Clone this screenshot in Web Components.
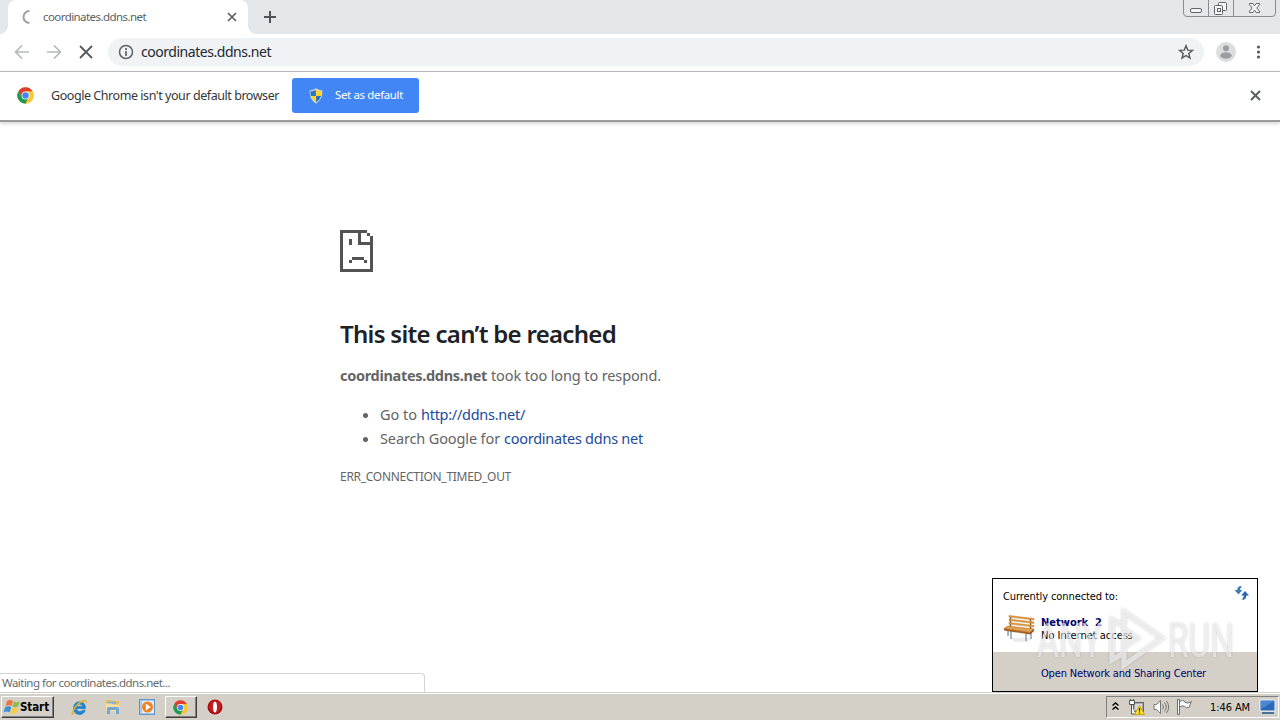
<!DOCTYPE html>
<html lang="en">
<head>
<meta charset="utf-8">
<title>coordinates.ddns.net</title>
<style>
  body {
    margin: 0;
    width: 1280px;
    height: 720px;
    overflow: hidden;
    background: #ffffff;
    font-family: "Noto Sans", "Open Sans", sans-serif;
  }
</style>
</head>
<body>
<desktop-screen>
  <tab-strip>coordinates.ddns.net</tab-strip>
  <nav-toolbar>coordinates.ddns.net</nav-toolbar>
  <info-bar>Google Chrome isn't your default browser</info-bar>
  <error-page></error-page>
  <status-bubble slot="status">Waiting for coordinates.ddns.net...</status-bubble>
  <network-flyout slot="flyout"></network-flyout>
  <run-watermark slot="flyout"></run-watermark>
  <task-bar slot="taskbar"></task-bar>
</desktop-screen>

<script>
function define(name, html) {
  const template = document.createElement('template');
  template.innerHTML = html;
  customElements.define(name, class extends HTMLElement {
    connectedCallback() {
      if (this.shadowRoot) return;
      this.attachShadow({ mode: 'open' }).append(template.content.cloneNode(true));
    }
  });
}

// One line of text, tracked so that it fills the given width.
class FitText extends HTMLElement {
  connectedCallback() {
    if (this.shadowRoot) return;
    const shadow = this.attachShadow({ mode: 'open' });
    shadow.innerHTML = '<style>:host { display: inline-block; flex-shrink: 0; white-space: nowrap; } span { display: inline-block; }</style><span><slot></slot></span>';
    const span = shadow.querySelector('span');
    const target = Number(this.getAttribute('width'));
    const nodes = shadow.querySelector('slot').assignedNodes({ flatten: true });
    const count = nodes.map((n) => n.textContent).join('').length;
    const natural = span.getBoundingClientRect().width;
    span.style.letterSpacing = `${(target - natural) / count}px`;
    this.style.width = `${target}px`;
  }
}

define('chrome-logo', `
  <style>
    :host { display: block; width: 17px; height: 17px; }
    svg { display: block; width: 100%; height: 100%; }
  </style>
  <svg viewBox="0 0 48 48">
    <circle cx="24" cy="24" r="23" fill="#fbc733"/>
    <path d="M24 13H44.200A23 23 0 0 0 4 12.500L14.500 29.500Z" fill="#df3f32"/>
    <path d="M4 12.500A23 23 0 0 0 24 47L33.500 29.500 24 34 14.500 29.500Z" fill="#1d9a57"/>
    <path d="M44.200 13A23 23 0 0 1 24 47L33.500 29.500 24 13Z" fill="#fbc733"/>
    <circle cx="24" cy="24" r="11" fill="#ffffff"/>
    <circle cx="24" cy="24" r="9" fill="#4285f4"/>
  </svg>
`);

define('window-buttons', `
  <style>
    :host { display: block; width: 94px; height: 18px; }
    svg { display: block; }
  </style>
  <svg width="94" height="18" fill="none" stroke="#7c8186">
    <path d="M.5 0v13q0 3.500 3.500 3.500h85q3.500 0 3.500-3.500V0M25.500 0v16M50.500 0v16" stroke="#888d92"/>
    <rect x="7.500" y="8.500" width="11" height="4" rx="1.500" fill="#f4f5f6" stroke="#5f6469"/>
    <rect x="35.500" y="2.500" width="8" height="8" rx="1" fill="#f4f5f6" stroke="#5f6469"/>
    <rect x="31.500" y="5.500" width="8" height="9" rx="1" fill="#f4f5f6" stroke="#5f6469"/>
    <rect x="34.500" y="8.500" width="3" height="3" stroke="#5f6469"/>
    <path d="M66.500 3.500h3.300l1.700 2.300 1.700-2.300h3.300v1.300L73.800 8l2.700 3.200v1.300h-3.300l-1.700-2.300-1.700 2.300h-3.300v-1.300L69.200 8l-2.700-3.200z" fill="#f4f5f6" stroke="#5f6469"/>
  </svg>
`);

define('tab-strip', `
  <style>
    :host { display: flex; height: 34px; background: #e3e7ea; box-sizing: border-box; }
    .tab {
      display: flex;
      align-items: center;
      box-sizing: border-box;
      width: 240px;
      height: 34px;
      margin-left: 8px;
      padding: 0 11px 0 12px;
      background: #ffffff;
      border-radius: 8px 8px 0 0;
      position: relative;
    }
    .tab::before, .tab::after {
      content: "";
      position: absolute;
      bottom: 0;
      width: 8px;
      height: 8px;
    }
    .tab::before { left: -8px; background: radial-gradient(circle at 0 0, transparent 7.500px, #ffffff 8px); }
    .tab::after { right: -8px; background: radial-gradient(circle at 100% 0, transparent 7.500px, #ffffff 8px); }
    .title { flex: 1; margin-left: 11px; font-size: 11.500px; line-height: 16px; color: #5c5f62; }
    svg { display: block; flex-shrink: 0; }
    .plus { margin: 10px 0 0 15px; }
    window-buttons { margin-left: auto; margin-right: 3px; }
  </style>
  <div class="tab">
    <svg width="12" height="14" fill="none" stroke="#a0a1a3" stroke-width="2"><path d="M9.500 1A6 6 0 0 0 9.500 13"/></svg>
    <span class="title"><fit-text width="103"><slot></slot></fit-text></span>
    <svg width="10" height="10" stroke="#5c5f62" stroke-width="1.700"><path d="m1 1 8 8M9 1 1 9"/></svg>
  </div>
  <svg class="plus" width="14" height="14" stroke="#505458" stroke-width="2"><path d="M7 1v12M1 7h12"/></svg>
  <window-buttons></window-buttons>
`);

define('nav-toolbar', `
  <style>
    :host {
      display: flex;
      align-items: center;
      box-sizing: border-box;
      height: 38px;
      padding: 0 14px 1px;
      background: #ffffff;
      border-bottom: 1px solid #b1b3b6;
    }
    svg { display: block; flex-shrink: 0; }
    .nav { display: flex; gap: 16px; }
    .omnibox {
      display: flex;
      align-items: center;
      box-sizing: border-box;
      width: 1096px;
      height: 28px;
      margin-left: 14px;
      padding: 0 10px;
      border-radius: 14px;
      background: #f0f3f5;
    }
    .url { flex: 1; margin-left: 7px; font-size: 14px; line-height: 20px; color: #25282c; }
    .avatar { margin-left: 12px; }
    .menu { margin-left: 20px; }
  </style>
  <div class="nav">
    <svg width="16" height="16" fill="none" stroke="#b6b8ba" stroke-width="1.700"><path d="M15 8H2M8 1.500 1.500 8 8 14.500"/></svg>
    <svg width="16" height="16" fill="none" stroke="#b6b8ba" stroke-width="1.700"><path d="M1 8h13M8 1.500 14.500 8 8 14.500"/></svg>
    <svg width="16" height="16" fill="none" stroke="#55595d" stroke-width="1.800"><path d="m2 2 12 12M14 2 2 14"/></svg>
  </div>
  <div class="omnibox">
    <svg width="16" height="16"><circle cx="8" cy="8" r="6.500" fill="none" stroke="#5f6368" stroke-width="1.500"/><path d="M8 7v5M8 4v2" stroke="#5f6368" stroke-width="1.700"/></svg>
    <span class="url"><fit-text width="130"><slot></slot></fit-text></span>
    <svg width="16" height="16" fill="none" stroke="#55595d" stroke-width="1.400"><path d="m8 1.700 1.700 4.400 4.800.3-3.700 3 1.200 4.700L8 11.500l-4 2.600 1.200-4.700-3.700-3 4.800-.3z"/></svg>
  </div>
  <svg class="avatar" width="20" height="20"><circle cx="10" cy="10" r="10" fill="#dcdddd"/><circle cx="10" cy="6.200" r="3" fill="#9b9da0"/><ellipse cx="10" cy="13.500" rx="5.700" ry="3.300" fill="#9b9da0"/></svg>
  <svg class="menu" width="5" height="16" fill="#55595d"><circle cx="2.500" cy="3" r="1.600"/><circle cx="2.500" cy="8" r="1.600"/><circle cx="2.500" cy="13" r="1.600"/></svg>
`);

define('info-bar', `
  <style>
    :host {
      display: flex;
      align-items: center;
      box-sizing: border-box;
      height: 50px;
      padding: 0 19px 1px 17px;
      background: #ffffff;
      border-bottom: 2px solid #9b9b9b;
      box-shadow: 0 1px 4px #c8c8c8;
      position: relative;
    }
    .text { margin-left: 17px; font-size: 12.500px; line-height: 18px; color: #35383b; }
    .button {
      display: flex;
      align-items: center;
      box-sizing: border-box;
      width: 127px;
      height: 35px;
      margin-left: 13px;
      padding-left: 17px;
      gap: 12px;
      border-radius: 3px;
      background: #4285f4;
      color: #ffffff;
      font-size: 11.500px;
      line-height: 16px;
    }
    .button fit-text { padding-bottom: 1px; }
    .close { margin-left: auto; }
    svg { display: block; }
  </style>
  <chrome-logo></chrome-logo>
  <span class="text"><fit-text width="228"><slot></slot></fit-text></span>
  <div class="button">
    <svg width="14" height="16" viewBox="0 0 14 16">
      <path d="M7 .5Q4 2.500.8 2.500.2 11 7 15.500 13.800 11 13.200 2.500 10 2.500 7 .5Z" fill="#e5edf4" stroke="#a9b9c5" stroke-width=".6"/>
      <path d="M6.900 1.700V8H1.900Q1.200 5.800 1.500 3.300 4.500 3.300 6.900 1.700Z" fill="#2f74c4"/>
      <path d="M7.100 1.700V8h5q.7-2.200.4-4.700-3 0-5.400-1.600Z" fill="#f8d32d"/>
      <path d="M6.900 8v6.500Q3.200 12 1.900 8Z" fill="#f8d32d"/>
      <path d="M7.100 8v6.500q3.700-2.500 5-6.500Z" fill="#2871b8"/>
    </svg>
    <fit-text width="68">Set as default</fit-text>
  </div>
  <svg class="close" width="11" height="11" stroke="#5b5f62" stroke-width="2"><path d="m1 1 9 9M10 1 1 10"/></svg>
`);

define('error-page', `
  <style>
    :host { display: block; padding: 108px 0 0 340px; color: #646464; font-size: 14.500px; }
    svg { display: block; margin: 0 0 45px; }
    h1 { display: flex; margin: 0; font-size: 24px; font-weight: 600; line-height: 34px; color: #202124; }
    p { margin: 12px 0 0; line-height: 24px; white-space: nowrap; display: flex; gap: 4px; }
    ul { margin: 15px 0 0; padding: 0 0 0 40px; line-height: 24px; }
    li { height: 24px; }
    a { color: #1b4b9b; margin-left: 4px; }
    .code { display: flex; margin-top: 18px; font-size: 12px; line-height: 18px; }
  </style>
  <svg width="33" height="42" fill="#535353" shape-rendering="crispEdges">
    <path d="M0 0h27v3H3v36h27V15H18V3h3v9h9V6h3v36H0zM27 3h3v3h-3zM9 9h3v6H9zM12 27h12v3H12zM9 30h3v3H9zM24 30h3v3h-3z"/>
  </svg>
  <h1><fit-text width="276">This site can’t be reached</fit-text></h1>
  <p><b><fit-text width="147">coordinates.ddns.net</fit-text></b><fit-text width="170">took too long to respond.</fit-text></p>
  <ul>
    <li><fit-text width="37">Go to</fit-text><a><fit-text width="104">http://ddns.net/</fit-text></a></li>
    <li><fit-text width="120">Search Google for</fit-text><a><fit-text width="139">coordinates ddns net</fit-text></a></li>
  </ul>
  <div class="code"><fit-text width="171">ERR_CONNECTION_TIMED_OUT</fit-text></div>
`);

define('status-bubble', `
  <style>
    :host {
      display: flex;
      box-sizing: border-box;
      width: 425px;
      height: 19px;
      padding-left: 2px;
      border: 1px solid #d4d4d4;
      border-width: 1px 1px 0 0;
      border-radius: 0 4px 0 0;
      background: #ffffff;
      color: #66696c;
      font-size: 11.500px;
      line-height: 18px;
    }
  </style>
  <fit-text width="168"><slot></slot></fit-text>
`);

define('network-flyout', `
  <style>
    :host {
      display: flex;
      flex-direction: column;
      box-sizing: border-box;
      position: absolute;
      left: 992px;
      top: 578px;
      width: 266px;
      height: 114px;
      border: 1px solid #000000;
      background: #ffffff;
      color: #000000;
      font: 11px/13px "DejaVu Sans Condensed", "DejaVu Sans", sans-serif;
    }
    .head { display: flex; box-sizing: border-box; justify-content: space-between; padding: 7px 8px 0 10px; height: 29px; }
    .head fit-text { margin-top: 4px; }
    .row { display: flex; box-sizing: border-box; padding: 6px 0 0 10px; gap: 5px; height: 44px; }
    .names { display: flex; flex-direction: column; padding-top: 2px; }
    .name { font-weight: bold; color: #00006b; }
    .foot { display: flex; flex: 1; background: #d4d0c8; padding: 15px 0 0 48px; color: #00006b; }
    svg { display: block; flex-shrink: 0; }
  </style>
  <div class="head">
    <fit-text width="115">Currently connected to:</fit-text>
    <svg width="15" height="14">
      <path d="M6 0Q3 1 3.400 4H.5l4 4.500 3.800-4.500H6Q5.700 2 8 .8z" fill="#397cb9"/>
      <path d="M9 14q3.500-1 3.300-4.500H15L11 5 7.200 9.500h2.500q.3 2-1.700 3.700z" fill="#286aad"/>
    </svg>
  </div>
  <div class="row">
    <svg width="33" height="32">
      <path d="M7 24h22l-5 4H12z" fill="#ececec"/>
      <path d="M8 17v8M28 18v7M5 16v6M23 20v7" stroke="#7b909a" stroke-width="1.300"/>
      <path d="M7.500 2v13M27.500 4v13" stroke="#7b5b34" stroke-width="1.500"/>
      <path d="m6 1.500 25 3V6L6 3zM6 5l25 3v1.500l-25-3zM6 8.500l25 3V13L6 10z" fill="#dc9948" stroke="#c8802f" stroke-width=".5"/>
      <path d="m5 12 26 3-4 3.500-26-4z" fill="#e3a14f" stroke="#b06c28" stroke-width=".6"/>
      <path d="m1 14.500 26 4v2l-26-4z" fill="#a35e21"/>
      <path d="m27 18.500 4-3.500v2l-4 3.500z" fill="#8c4e1a"/>
    </svg>
    <div class="names">
      <fit-text class="name" width="61">Network&nbsp; 2</fit-text>
      <fit-text width="92">No Internet access</fit-text>
    </div>
  </div>
  <div class="foot"><fit-text width="165">Open Network and Sharing Center</fit-text></div>
`);

define('run-watermark', `
  <style>
    :host {
      display: flex;
      align-items: center;
      position: absolute;
      left: 1037px;
      top: 606px;
      width: 200px;
      height: 66px;
      font: 49px/50px Roboto, "Liberation Sans", sans-serif;
      color: rgba(255, 255, 255, 0.55);
      filter: drop-shadow(0 0 1px rgba(110, 110, 110, 0.6));
    }
    svg { display: block; flex-shrink: 0; margin-right: 2px; }
    .word { display: flex; box-sizing: border-box; flex-shrink: 0; padding-top: 3px; transform: scaleX(0.68); transform-origin: left center; }
    .any { width: 70px; }
    .run { width: 66px; }
  </style>
  <div class="word any">ANY</div>
  <svg width="59" height="64" fill="none" stroke="rgba(255,255,255,.6)" stroke-width="5">
    <path d="M17 19V5L55 31 17 58V42M17 19 5 13v40l12-7M17 22l13 9-13 9z"/>
  </svg>
  <div class="word run">RUN</div>
`);

define('task-bar', `
  <style>
    :host {
      display: flex;
      align-items: center;
      box-sizing: border-box;
      height: 28px;
      padding: 2px 1px 1px;
      background: #d4d0c8;
      border-top: 1px solid #d4d0c8;
      box-shadow: inset 0 1px #ffffff;
      color: #000000;
      font: 11px/14px "DejaVu Sans Condensed", "DejaVu Sans", sans-serif;
    }
    .raised { border: 1px solid; border-color: #ffffff #404040 #404040 #ffffff; box-shadow: inset -1px -1px #808080; }
    .start { display: flex; align-items: center; box-sizing: border-box; width: 53px; height: 22px; padding-left: 1px; font-weight: bold; font-size: 11.500px; }
    .apps { display: flex; align-items: center; margin-left: 16px; }
    .app { display: flex; justify-content: center; width: 18px; }
    .app + .app { margin-left: 16px; }
    .active { display: flex; align-items: center; justify-content: center; box-sizing: border-box; width: 32px; height: 22px; margin: 0 9px; padding-right: 2px; }
    .active chrome-logo { width: 15px; height: 15px; }
    .tray { display: flex; align-items: center; box-sizing: border-box; width: 173px; height: 22px; margin-left: auto; padding-left: 5px; border: 1px solid; border-color: #808080 #ffffff #ffffff #808080; }
    .more { margin-bottom: 3px; }
    .volume { margin-left: 7px; }
    .network { margin-left: 9px; }
    .flag { margin-left: 6px; }
    .tray fit-text { margin-left: 17px; padding-top: 2px; }
    .desktop { margin-left: 9px; }
    svg { display: block; flex-shrink: 0; }
  </style>
  <div class="start raised">
    <svg width="17" height="17">
      <path d="M4 2q3-2 6 0L8.500 7q-3-1.500-6 0z" fill="#ee7544"/>
      <path d="M11 2.500q3 1.500 6 0L15 7.500q-3 1.500-5.700 0z" fill="#8abe4a"/>
      <path d="M2.200 8q3-1.500 6 0L6.700 13.500q-3-2-6.200 0z" fill="#3c91d6"/>
      <path d="M9 8.500q3 1.500 6 0L13.500 14q-3 1.500-6 0z" fill="#fbcb42"/>
    </svg>
    <fit-text width="29">Start</fit-text>
  </div>
  <div class="apps">
    <span class="app"><svg width="17" height="17">
      <path d="M14.500 9.500H5.500q.2 3 3.300 3 2 0 2.800-1.300h2.600Q12.700 15.500 8.700 15.500 2.500 15 2.500 9 3 2.800 8.700 2.800 14.500 3 14.500 9.500zM5.500 7.500h6Q11.300 5.200 8.700 5.200 6 5.200 5.500 7.500z" fill="#2484cb" stroke="#2484cb" stroke-width=".8"/>
      <path d="M3 14q-3 3-1-2Q5 5 12 2q4-1.500 3 2" fill="none" stroke="#e3b52a" stroke-width="1.400"/>
    </svg></span>
    <span class="app"><svg width="16" height="16">
      <path d="M1 3V1h5l1 1h7v9H1z" fill="#e7bd55"/>
      <path d="M3 2.500h8v3H3z" fill="#88b3d2"/><path d="M1 4.500h6l1 1h6V12H1z" fill="#f7dfa0"/>
      <path d="M2 15V9.500Q2 8 3.500 8h9Q14 8 14 9.500V15h-3v-4H5v4z" fill="#72a8d8"/>
    </svg></span>
    <span class="app"><svg width="16" height="16">
      <rect x=".5" y=".5" width="15" height="15" fill="#a7caec" stroke="#5b95ce"/><rect x="3" y="2" width="12" height="12" fill="#e4effb"/>
      <circle cx="8.500" cy="8" r="5.500" fill="#f08220"/><path d="M6.800 4.500v7l5-3.500z" fill="#ffffff"/>
    </svg></span>
    <span class="active raised"><chrome-logo></chrome-logo></span>
    <span class="app"><svg width="16" height="16">
      <circle cx="8" cy="8" r="7.500" fill="#a70f14"/><circle cx="8" cy="7.500" r="6" fill="#c41c20"/><ellipse cx="8" cy="8" rx="2" ry="5.500" fill="#ffffff"/>
    </svg></span>
  </div>
  <div class="tray">
    <svg class="more" width="7" height="8" fill="none" stroke="#000000" stroke-width="1.400"><path d="m.5 3.500 3-2.500 3 2.500M.5 7.500l3-2.500 3 2.500"/></svg>
    <svg class="network" width="18" height="17">
      <rect x="5.500" y="3.500" width="10" height="9" fill="#a9a9a9" stroke="#656565"/><path d="M7 5h7v6H7z" fill="#d8d8d8"/>
      <path d="M1.500 1.500h5v4h-5zM3.500 5v10H7M2.500 0v2M5.500 0v2" fill="#ffffff" stroke="#555555"/>
      <path d="m11.500 6.500 5 9h-10z" fill="#ffe13a" stroke="#c9a100"/><path d="M11.500 9v3.500M11.500 13.500v1" stroke="#222222" stroke-width="1.200"/>
    </svg>
    <svg class="volume" width="17" height="16" fill="none" stroke="#777777">
      <path d="M1 5.500h2.500l4-4v13l-4-4H1z" fill="#ffffff"/><path d="M9.500 5.500q2 2.500 0 5M11.500 3.500q3.500 4.500 0 9M13.500 2q4.500 6 0 12"/>
    </svg>
    <svg class="flag" width="17" height="16" fill="#ffffff" stroke="#6f6f6f">
      <path d="M1.500.5h2v15h-2zM3.500 2.500q3-2 5.500 0v1q3 1.500 6.500-1-2 3-2 5.500-3 2-5-.5-2-1.500-5 .5z"/>
    </svg>
    <fit-text width="40">1:46 AM</fit-text>
    <svg class="desktop" width="18" height="16">
      <path d="M1 1h15v11H1z" fill="#2b69b7" stroke="#edf3fa"/><path d="M2 2h13L2 10z" fill="#4989d4"/><path d="M3 14h12" stroke="#497099" stroke-width="2"/>
    </svg>
  </div>
`);

define('desktop-screen', `
  <style>
    :host { display: flex; flex-direction: column; width: 1280px; height: 720px; position: relative; }
    main { flex: 1; min-height: 0; }
  </style>
  <main><slot></slot></main>
  <slot name="status"></slot>
  <slot name="taskbar"></slot>
  <slot name="flyout"></slot>
`);

customElements.define('fit-text', FitText);
</script>
</body>
</html>
